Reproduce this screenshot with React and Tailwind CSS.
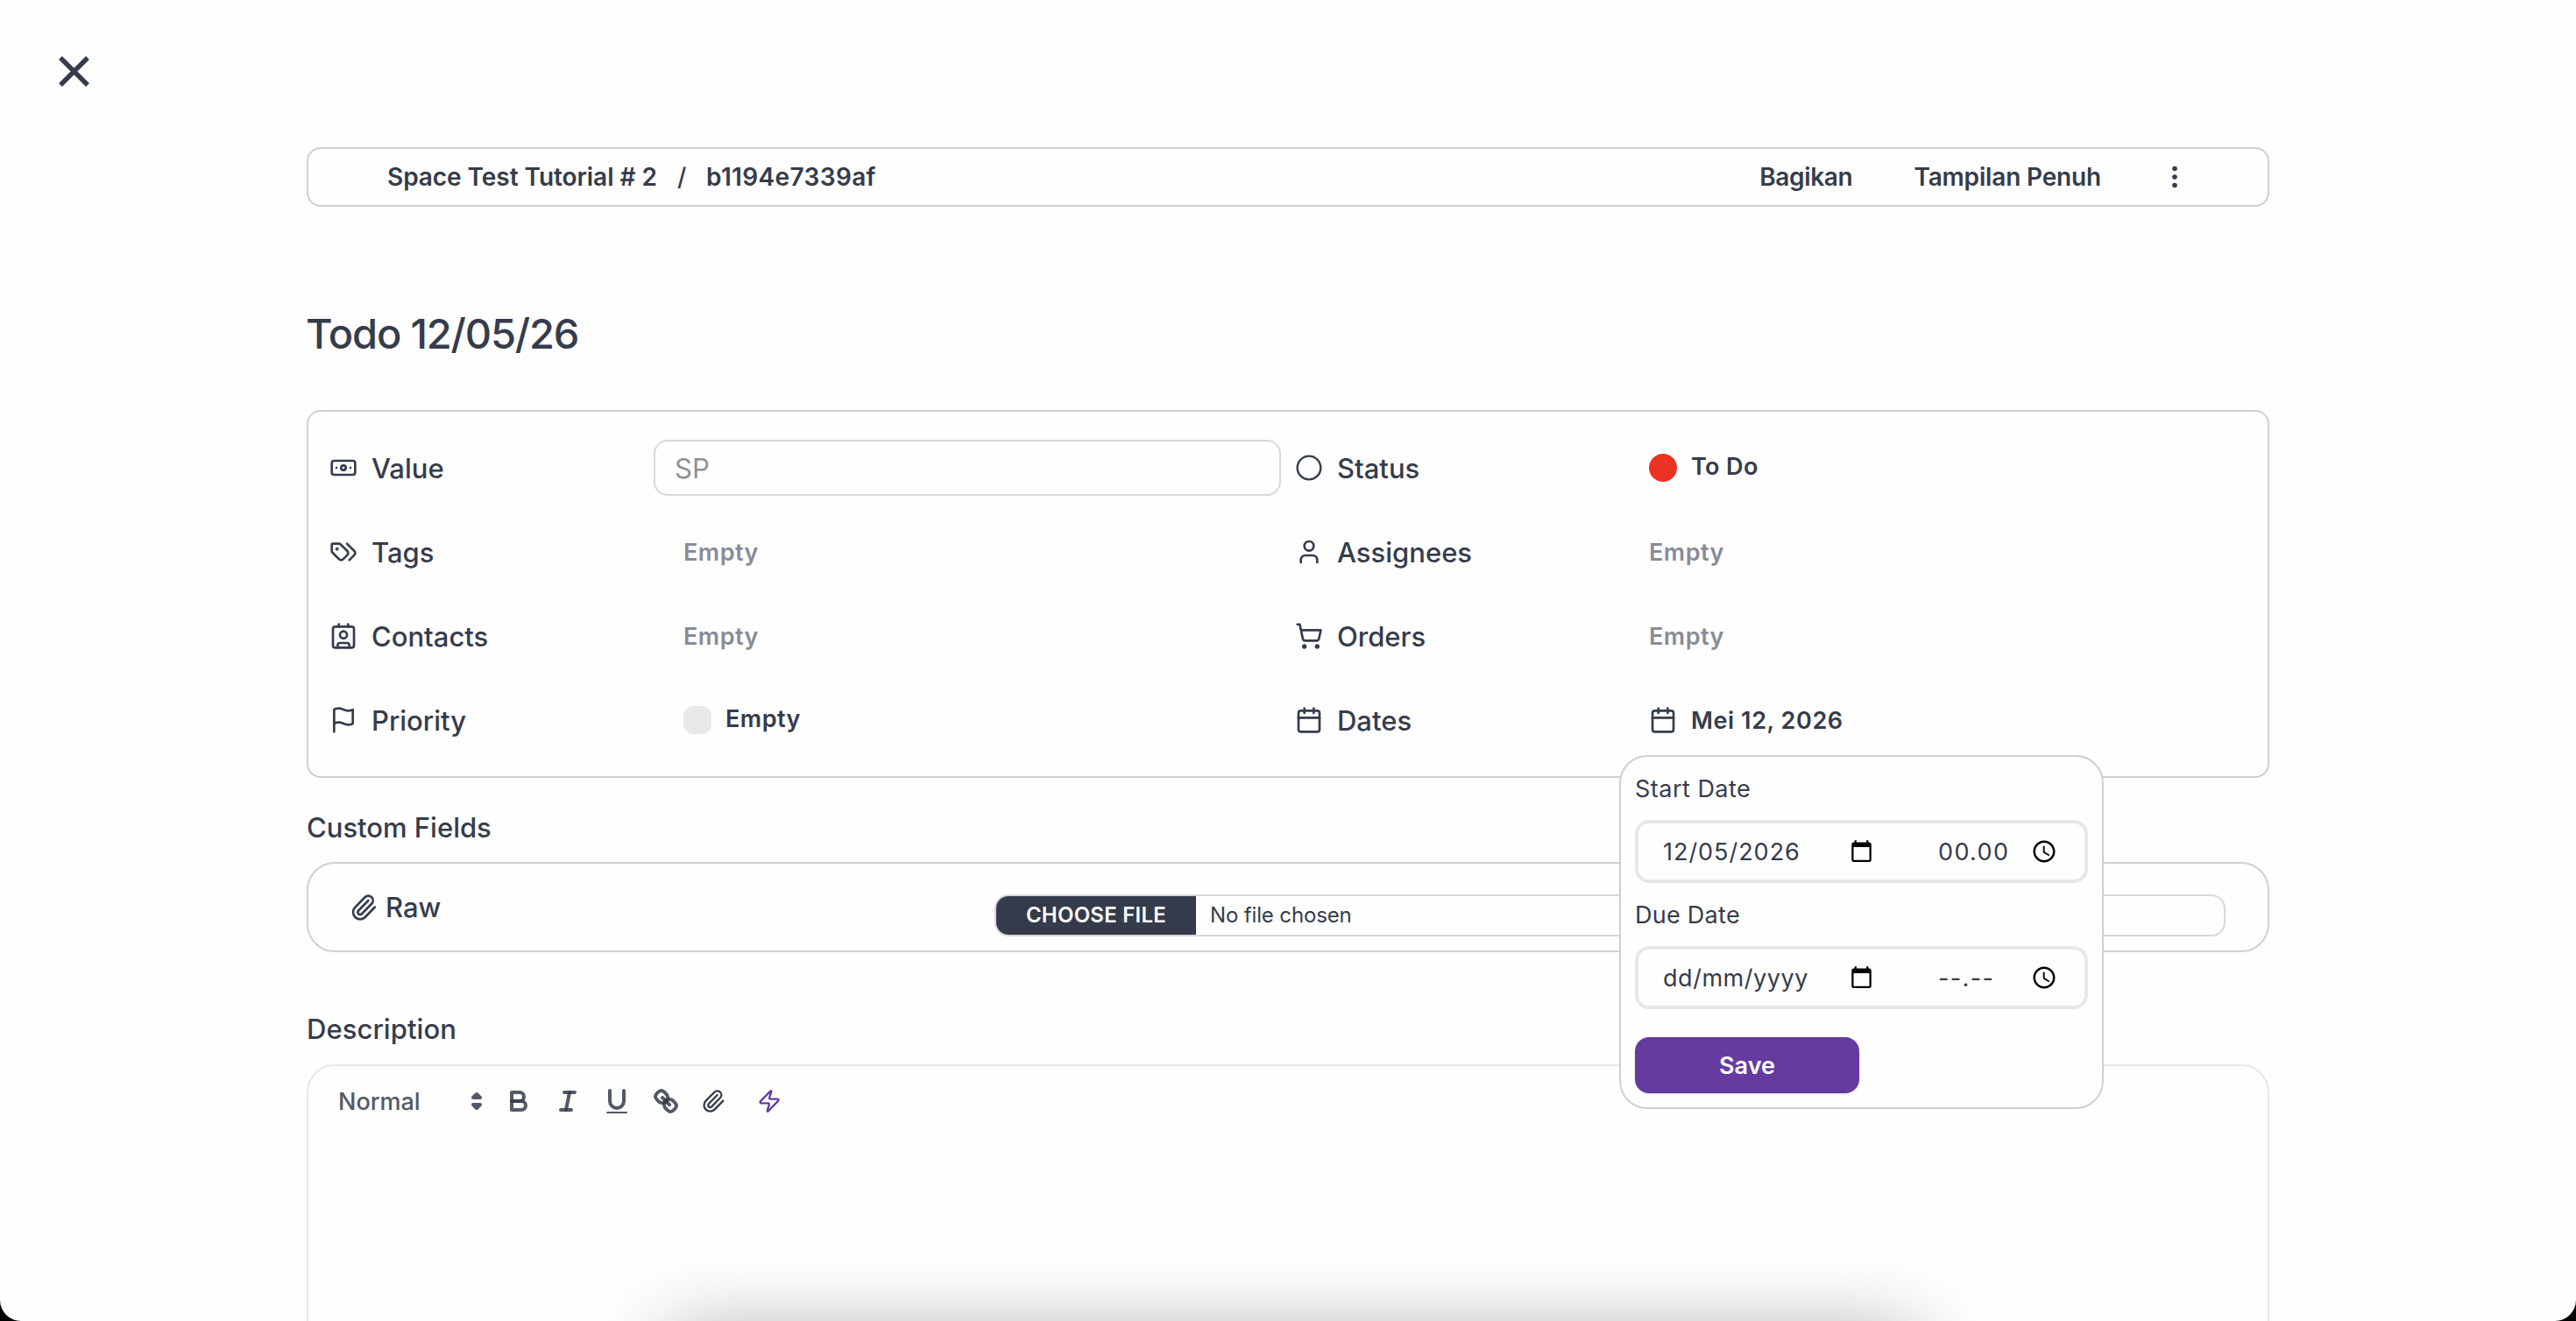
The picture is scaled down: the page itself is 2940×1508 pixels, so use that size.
import React from 'react';
import {
  Banknote,
  Contact,
  ShoppingCart,
  User,
  Circle,
  Calendar,
  Paperclip,
  Zap,
} from 'lucide-react';

// Icons drawn by hand where the package shape differs
const Svg = ({ className = 'size-8', children }) => (
  <svg
    viewBox="0 0 24 24"
    fill="none"
    stroke="currentColor"
    strokeWidth="2"
    strokeLinecap="round"
    strokeLinejoin="round"
    className={className}
  >
    {children}
  </svg>
);

const TagsIcon = () => (
  <Svg>
    <path d="m15 5 6.3 6.3a2.4 2.4 0 0 1 0 3.4L17 19" />
    <path d="M9.586 5.586A2 2 0 0 0 8.172 5H3a1 1 0 0 0-1 1v5.172a2 2 0 0 0 .586 1.414L8.29 18.29a2.426 2.426 0 0 0 3.42 0l3.58-3.58a2.426 2.426 0 0 0 0-3.42z" />
    <circle cx="6.5" cy="9.5" r=".5" fill="currentColor" />
  </Svg>
);

const FlagIcon = () => (
  <Svg>
    <path d="M4 15s1-1 4-1 5 2 8 2 4-1 4-1V3s-1 1-4 1-5-2-8-2-4 1-4 1z" />
    <path d="M4 22v-7" />
  </Svg>
);

const PickerCalendar = () => (
  <svg viewBox="0 0 24 24" className="mb-0.5 size-[27px] text-black" fill="currentColor">
    <path d="M20 3h-1V1h-2v2H7V1H5v2H4c-1.1 0-2 .9-2 2v16c0 1.1.9 2 2 2h16c1.1 0 2-.9 2-2V5c0-1.1-.9-2-2-2zm0 18H4V8h16v13z" />
  </svg>
);

const PickerClock = () => (
  <svg viewBox="0 0 24 24" className="mb-px size-[30px] text-black" fill="currentColor">
    <path d="M11.99 2C6.47 2 2 6.48 2 12s4.47 10 9.99 10C17.52 22 22 17.52 22 12S17.52 2 11.99 2zM12 20c-4.42 0-8-3.58-8-8s3.58-8 8-8 8 3.58 8 8-3.58 8-8 8z" />
    <path d="M12.5 7H11v6l5.25 3.15.75-1.23-4.5-2.67z" />
  </svg>
);

// Editor toolbar icons share an 18 unit grid
const ToolIcon = ({ children }) => (
  <svg
    viewBox="0 0 18 18"
    className="size-9"
    fill="none"
    stroke="#353c4b"
    strokeOpacity="0.85"
    strokeWidth="2"
    strokeLinecap="round"
    strokeLinejoin="round"
  >
    {children}
  </svg>
);

const Field = ({ icon, label, children }) => (
  <div className="flex h-16 items-center">
    <div className="flex w-[370px] shrink-0 items-center gap-4">
      {icon}
      <span className="text-[31px] leading-none font-medium">{label}</span>
    </div>
    {children}
  </div>
);

const Empty = () => (
  <span className="pl-[34px] text-[27px] leading-none font-semibold tracking-[0.018em] text-[#878c95]">
    Empty
  </span>
);

const DateRow = ({ label, date, time }) => (
  <div>
    <div className="flex h-9 items-center text-[27px] leading-none">{label}</div>
    <div className="mt-[18px] flex h-[72px] items-center rounded-2xl border-4 border-[#e5e7eb] pl-[28px]">
      <span className="w-[213px] text-[27px] leading-none">{date}</span>
      <PickerCalendar />
      <span className="ml-[74px] w-[106px] text-[27px] leading-none tracking-[0.05em]">{time}</span>
      <PickerClock />
    </div>
  </div>
);

const DatePopup = () => (
  <div className="absolute top-[392px] left-[1496px] h-[404px] w-[553px] rounded-[32px] border-2 border-[#cfcfcf] bg-[#fefefe] px-4 pt-[18px]">
    <DateRow
      label={<span className="tracking-[0.018em]">Start Date</span>}
      date={<span className="tracking-[0.036em]">12/05/2026</span>}
      time="00.00"
    />
    <div className="h-[18px]" />
    <DateRow
      label={<span className="tracking-[0.01em]">Due Date</span>}
      date={<span className="tracking-[0.02em]">dd/mm/yyyy</span>}
      time="--.--"
    />
    <button className="mt-8 flex h-16 w-64 items-center justify-center rounded-2xl bg-[#653b9f] text-[27px] leading-none font-semibold text-white shadow-sm">
      Save
    </button>
  </div>
);

const App = () => {
  return (
    <div className="h-[1508px] w-[2940px] overflow-hidden bg-black font-['Inter',sans-serif] text-[#353c4b]">
      <div className="relative h-full overflow-hidden rounded-b-[24px] bg-[#fefefe]">
        {/* Close */}
        <div className="flex h-[168px] pt-[64px] pl-[67px]">
          <svg viewBox="0 0 35 35" className="size-[35px]" stroke="currentColor" strokeWidth="5.4">
            <path d="M2 2 33 33M33 2 2 33" />
          </svg>
        </div>

        <main className="mx-auto w-[2240px]">
          {/* Breadcrumb bar */}
          <header className="flex h-[68px] items-center rounded-2xl border-2 border-[#cfcfcf] pl-[90px] text-[28px] leading-none font-semibold">
            <span className="w-[331px] tracking-[-0.002em]">Space Test Tutorial # 2</span>
            <span className="w-[33px] font-medium">/</span>
            <span className="tracking-[0.013em]">b1194e7339af</span>
            <span className="mr-[70px] ml-auto tracking-[-0.012em]">Bagikan</span>
            <span className="tracking-[-0.006em]">Tampilan Penuh</span>
            <svg viewBox="0 0 6 26" className="mr-[103px] ml-[81px] h-[26px] w-[6px]" fill="currentColor">
              <circle cx="3" cy="3.5" r="2.8" />
              <circle cx="3" cy="13" r="2.8" />
              <circle cx="3" cy="22.5" r="2.8" />
            </svg>
          </header>

          <h1 className="mt-[121px] -ml-px h-[111px] text-[47px] leading-[48px] font-medium tracking-[-0.025em]">
            Todo 12/05/26
          </h1>

          {/* Task fields */}
          <section className="relative grid h-[420px] grid-cols-[1086px_1fr] content-start gap-x-4 gap-y-8 rounded-2xl border-2 border-[#cfcfcf] pt-8 pl-6">
            <Field icon={<Banknote className="size-8" />} label="Value">
              <div className="flex h-16 w-[716px] items-center rounded-2xl border-2 border-[#d6d8dc] pl-[22px] text-[31px] leading-none text-[#8d929b]">
                SP
              </div>
            </Field>
            <Field icon={<Circle className="size-8" strokeWidth={1.8} />} label="Status">
              <span className="ml-[34px] size-8 rounded-full bg-[#ea3323]" />
              <span className="ml-[16px] pb-[4px] text-[27px] leading-none font-semibold tracking-[0.014em]">To Do</span>
            </Field>
            <Field icon={<TagsIcon />} label="Tags">
              <Empty />
            </Field>
            <Field icon={<User className="size-8" />} label="Assignees">
              <Empty />
            </Field>
            <Field icon={<Contact className="size-8" />} label="Contacts">
              <Empty />
            </Field>
            <Field icon={<ShoppingCart className="size-8" />} label="Orders">
              <Empty />
            </Field>
            <Field icon={<FlagIcon />} label="Priority">
              <span className="ml-[34px] size-8 rounded-[11px] bg-[#e8e8e8]" />
              <span className="ml-[16px] pb-[4px] text-[27px] leading-none font-semibold tracking-[0.018em]">Empty</span>
            </Field>
            <Field icon={<Calendar className="size-8" />} label="Dates">
              <Calendar className="ml-[34px] size-8" />
              <span className="ml-[16px] text-[27px] leading-none font-semibold tracking-[0.022em]">Mei 12, 2026</span>
            </Field>
            <DatePopup />
          </section>

          {/* Custom fields */}
          <h2 className="flex h-24 items-center pt-[17px] text-[31px] leading-none font-medium">
            Custom Fields
          </h2>
          <section className="flex h-[103px] items-start rounded-[32px] border-2 border-[#cfcfcf] pr-12 pl-[47px]">
            <div className="flex h-full w-[736px] items-center gap-[9px]">
              <Paperclip className="size-8" />
              <span className="text-[31px] leading-none font-medium">Raw</span>
            </div>
            <div className="mt-[35px] flex h-[48px] flex-1 overflow-hidden rounded-2xl border-2 border-[#d6d8dc] text-[24px]">
              <span className="flex w-[228px] items-center justify-center bg-[#353b4a] font-semibold tracking-[0.01em] text-white">
                CHOOSE FILE
              </span>
              <span className="flex items-center pl-[16px] tracking-[-0.006em]">No file chosen</span>
            </div>
          </section>

          {/* Description editor */}
          <h2 className="mt-[62px] flex h-[66px] items-start pt-[10px] text-[31px] leading-none font-medium tracking-[0.002em]">
            Description
          </h2>
          <section className="h-[400px] rounded-t-[32px] border-2 border-[#e7e7e7]">
            <div className="flex items-center gap-5 pt-[22px] pl-[34px]">
              <div className="flex items-center text-[27px] leading-none font-medium text-[#535966]">
                <span className="w-[140px]">Normal</span>
                <svg viewBox="0 0 18 18" className="size-9" fill="#535966" stroke="#535966" strokeWidth="2" strokeLinejoin="round">
                  <path d="M7 11 9 13 11 11zM7 7 9 5 11 7z" />
                </svg>
              </div>
              <div className="-ml-2 flex items-center gap-5">
                <ToolIcon>
                  <path d="M5 4h4.5a2.5 2.5 0 0 1 0 5H5z" />
                  <path d="M5 9h5.5a2.5 2.5 0 0 1 0 5H5z" />
                </ToolIcon>
                <ToolIcon>
                  <path d="M7 4h6" />
                  <path d="M5 14h6" />
                  <path d="M8 14 10 4" />
                </ToolIcon>
                <ToolIcon>
                  <path d="M5 3v6a4.012 4.012 0 0 0 4 4 4.012 4.012 0 0 0 4-4V3" />
                  <path d="M3.5 15.5h11" strokeWidth="1" />
                </ToolIcon>
                <ToolIcon>
                  <path d="M7 7 11 11" />
                  <path d="M8.9 4.577a3.476 3.476 0 0 1 .36 4.679A3.476 3.476 0 0 1 4.577 8.9C3.185 7.5 2.035 6.4 4.217 4.217S7.5 3.185 8.9 4.577Z" />
                  <path d="M13.423 9.1a3.476 3.476 0 0 0-4.679-.36 3.476 3.476 0 0 0 .36 4.679c1.392 1.392 2.5 2.542 4.679.36S14.815 10.5 13.423 9.1Z" />
                </ToolIcon>
                <Paperclip className="ml-0.5 size-7" />
                <Zap className="ml-4 size-7 text-[#653b9f]" />
              </div>
            </div>
          </section>
        </main>

        {/* Shadow rising from below the window */}
        <div className="absolute top-[1520px] left-[760px] h-[200px] w-[1430px] rounded-[30px] shadow-[0_0_90px_rgba(0,0,0,0.32)]" />
      </div>
    </div>
  );
};

export default App;
